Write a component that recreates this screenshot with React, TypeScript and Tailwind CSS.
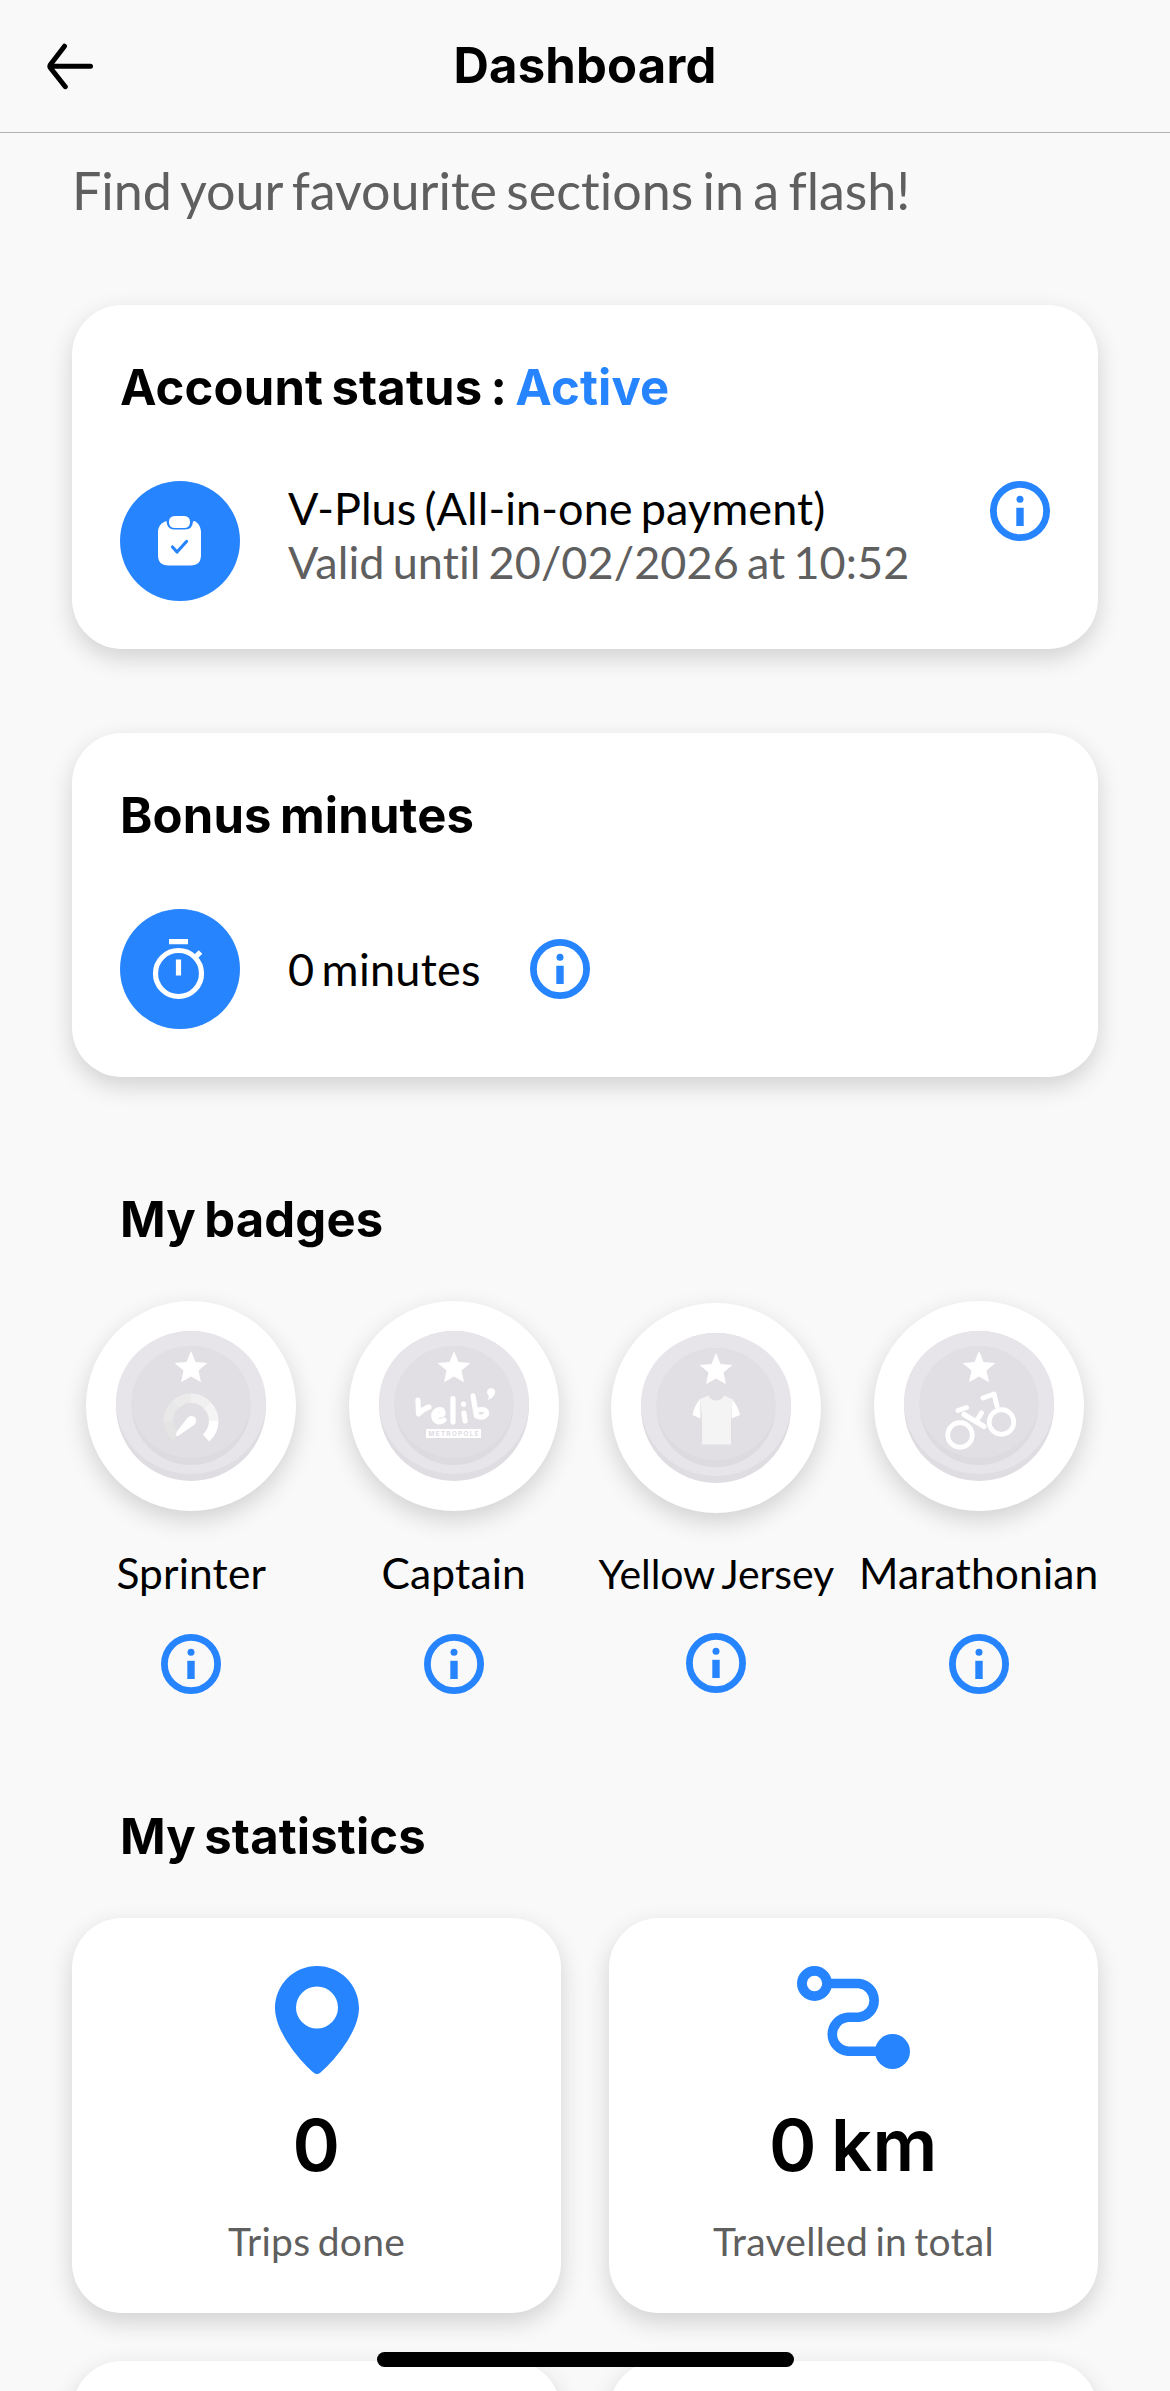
import type { ReactNode } from 'react'

const BLUE = '#2684ff'

function InfoIcon() {
  return (
    <svg viewBox="0 0 60 60" className="size-[60px] shrink-0" fill={BLUE}>
      <circle cx="30" cy="30" r="26.6" fill="none" stroke={BLUE} strokeWidth="6.8" />
      <circle cx="30" cy="18.200" r="3.5" />
      <path d="M26.3 26.8h7.4v18.200h-7.4z" />
    </svg>
  )
}

function BackArrow() {
  return (
    <svg viewBox="0 0 48 48" className="size-12" fill="none" stroke="#000" strokeWidth="5" strokeLinecap="round" strokeLinejoin="round">
      <path d="M18.500 4.200L4.500 22.500Q3.200 24.300 4.500 26L19.300 44.700M4 24.300H44.500" />
    </svg>
  )
}

function ClipboardIcon() {
  return (
    <svg viewBox="0 0 120 120" className="size-[120px] shrink-0">
      <circle cx="60" cy="60" r="60" fill={BLUE} />
      <path fill="#fff" d="M46.5 40C41 41.500 38 46 38 51V74Q38 84.500 48.500 84.500H70.500Q81 84.500 81 74V51C81 46 78 41.500 74.500 40L73 40.500Q72.500 48.500 65 48.500H54Q47 48.500 46.500 40Z" />
      <rect x="49" y="35" width="21" height="12" rx="5.500" fill="#fff" />
      <path d="M52.500 66L57 71L66.500 60.500" fill="none" stroke={BLUE} strokeWidth="3.200" strokeLinecap="round" strokeLinejoin="round" />
    </svg>
  )
}

function TimerIcon() {
  return (
    <svg viewBox="0 0 120 120" className="size-[120px] shrink-0">
      <circle cx="60" cy="60" r="60" fill={BLUE} />
      <g fill="none" stroke="#fff" strokeWidth="5.200">
        <circle cx="58.500" cy="64.500" r="23" />
        <path d="M49 32.600H68M58.500 50.500V66.500M75 48.500L80.500 43" />
      </g>
    </svg>
  )
}

function PinIcon() {
  return (
    <svg viewBox="0 0 84 108" className="h-[108px] w-[84px]">
      <path fill={BLUE} fillRule="evenodd" d="M42 0C18.800 0 0 18.800 0 42C0 67 28 98 38.500 106.500Q42 109.500 45.500 106.500C56 98 84 67 84 42C84 18.800 65.200 0 42 0ZM42 20.500A21 21 0 1 1 42 62.500A21 21 0 1 1 42 20.500Z" />
    </svg>
  )
}

function RouteIcon() {
  return (
    <svg viewBox="0 0 113 104" className="h-[104px] w-[113px]" fill="none" stroke={BLUE}>
      <circle cx="17.500" cy="17.500" r="12.600" strokeWidth="9.800" />
      <path strokeWidth="9.600" d="M32 17.500H62A17 17 0 0 1 62 51.300H51A17 17 0 0 0 51 85.200H86" />
      <circle cx="95.500" cy="85.500" r="17.500" fill={BLUE} stroke="none" />
    </svg>
  )
}

function Gauge() {
  return (
    <g>
      <g fill="none" strokeWidth="9.500">
        <path stroke="#e4e4e4" d="M60 106A22.700 22.700 0 0 1 52.300 89" />
        <path stroke="#e8e8e8" d="M52.300 90A22.700 22.700 0 0 1 59 74" />
        <path stroke="#ebebeb" d="M59 74A22.700 22.700 0 0 1 75 67.300" />
        <path stroke="#f0f0f0" d="M75 67.300A22.700 22.700 0 0 1 91 74" />
        <path stroke="#f5f5f5" d="M91 74A22.700 22.700 0 0 1 97.700 90" />
        <path stroke="#fff" d="M97.700 90A22.700 22.700 0 0 1 90 107" />
      </g>
      <path fill="#fff" d="M60 105L60.500 101L71 87.500A5 5 0 0 1 80 88Q80.500 92 78 94L62 105Z" />
    </g>
  )
}

function VelibLogo() {
  return (
    <g>
      <g fill="none" stroke="#fff" strokeWidth="5.200" strokeLinecap="round" strokeLinejoin="round">
        <path d="M39 69L39.500 83Q44 78 50 76" />
        <path d="M56 86L64 83Q64 77 58.500 79Q53 82 55.500 88Q59 93 65 89" />
        <path d="M74 67.500V91M85 82L86 90M84.500 73V73.200" />
        <path d="M94 65L97.500 85Q104 88 107.500 83Q108 77 99 79" />
      </g>
      <path fill="#fff" d="M108 62Q108 57.500 112 57Q117 58 116 62Q114.500 67 109 69L110 65.500Z" />
      <rect x="47" y="98" width="55" height="9" fill="#fff" />
      <text x="74.500" y="104.800" textAnchor="middle" fontSize="6.200" fontWeight="700" textLength="50" fill="#dcdadf" fontFamily="Inter, sans-serif">METROPOLE</text>
    </g>
  )
}

function Jersey() {
  return (
    <g>
      <path fill="#fff" d="M59 66Q53 73 51.500 82L59.500 85.500ZM91 66Q97 73 99 82L90.500 85.500Z" />
      <path fill="#f4f4f4" d="M59 66L67.500 62.500Q70 67.500 75 67.500Q80.500 67.500 83 62.500L92 66.500L90 83V111.500H61V83Z" />
    </g>
  )
}

function Bike() {
  return (
    <g fill="none" stroke="#fff" strokeLinecap="round" strokeLinejoin="round">
      <g strokeWidth="4.700">
        <circle cx="56" cy="104" r="12.300" />
        <circle cx="97.500" cy="91" r="12.300" />
      </g>
      <path strokeWidth="5" d="M54 79.500L62.500 76.500M60 83.500L80 95.500M72.500 90L77.500 82M79 67L90 63L93 75" />
    </g>
  )
}

function Medal({ children }: { children: ReactNode }) {
  return (
    <div className="flex size-[210px] items-center justify-center rounded-full bg-white shadow-[0_9px_24px_rgba(0,0,0,0.16)]">
      <svg viewBox="0 0 150 150" className="size-[150px]">
        <circle cx="75" cy="75" r="75" fill="#dfdde1" />
        <path fill="#e7e5e9" d="M0 71A75 71 0 0 1 150 71A75 72 0 0 1 0 71Z" />
        <circle cx="75" cy="74.500" r="59.500" fill="#dddbdf" />
        <path fill="#e1dfe3" d="M15.500 71A59.500 56 0 0 1 134.500 71A59.500 56 0 0 1 15.500 71Z" />
        <path fill="#fff" d="M75 20L79.500 31L91.500 32L82.500 39.500L85 51.200L75 45.500L65 51.200L67.500 39.500L58.500 32L70.500 31Z" />
        {children}
      </svg>
    </div>
  )
}

function Heading({ children }: { children: ReactNode }) {
  return <h2 className="whitespace-pre font-['Inter'] text-[49px] leading-[60px] font-bold tracking-[0.15px] [word-spacing:-3.5px]">{children}</h2>
}

const cardShadow = 'rounded-[50px] bg-white shadow-[0_9px_24px_rgba(0,0,0,0.16)]'

function Badge({ label, art, className = '', labelClass = 'text-[42.5px] mt-[37px] mb-[36px] tracking-[0.15px]' }: { label: string; art: ReactNode; className?: string; labelClass?: string }) {
  return (
    <div className={`flex w-[262.500px] flex-col items-center ${className}`}>
      <Medal>{art}</Medal>
      <p className={`whitespace-nowrap leading-[50px] ${labelClass}`}>{label}</p>
      <InfoIcon />
    </div>
  )
}

function Stat({ icon, value, label }: { icon: ReactNode; value: string; label: string }) {
  return (
    <div className={`flex h-[395px] flex-1 flex-col items-center pt-12 ${cardShadow}`}>
      <div className="h-[108px]">{icon}</div>
      <p className="mt-[29px] font-['Inter'] text-[72px] leading-[84px] font-semibold tracking-[0.6px] [word-spacing:-5px]">{value}</p>
      <p className="mt-[31px] text-[39px] leading-[47px] tracking-[0.28px] text-[#5f5f5f] [word-spacing:-3px]">{label}</p>
    </div>
  )
}

export default function App() {
  return (
    <div className="relative h-[2391px] w-[1170px] overflow-hidden bg-[#f9f9f9] font-['Lato',sans-serif] text-black [font-variant-ligatures:none]">
      <header className="grid h-[133px] grid-cols-[1fr_auto_1fr] items-center border-b border-[#b1b1b1] px-[46px]">
        <BackArrow />
        <h1 className="font-['Inter'] text-[49px] leading-[60px] font-bold tracking-[0.2px]">Dashboard</h1>
      </header>

      <main className="px-[72px]">
        <p className="mt-[26px] whitespace-nowrap text-[52px] leading-[62px] text-[#5f5f5f] [word-spacing:-4px]">Find your favourite sections in a flash!</p>

        <section className={`mt-[84px] h-[344px] px-12 pt-[53px] ${cardShadow}`}>
          <Heading>Account status : <span className="text-[#2684ff]">Active</span></Heading>
          <div className="mt-[63px] flex items-start">
            <ClipboardIcon />
            <div className="ml-12 grow text-[45px] leading-[54px] tracking-[0.08px] whitespace-nowrap [word-spacing:-3.5px]">
              <p>V-Plus (All-in-one payment)</p>
              <p className="text-[#5f5f5f]">Valid until 20/02/2026 at 10:52</p>
            </div>
            <InfoIcon />
          </div>
        </section>

        <section className={`mt-[84px] h-[344px] px-12 pt-[53px] ${cardShadow}`}>
          <Heading>Bonus minutes</Heading>
          <div className="mt-[63px] flex items-center">
            <TimerIcon />
            <p className="mr-[49px] ml-12 text-[45px] leading-[54px] tracking-[0.25px] [word-spacing:-4.5px]">0 minutes</p>
            <InfoIcon />
          </div>
        </section>

        <section className="mt-[113px]">
          <div className="pl-12"><Heading>My badges</Heading></div>
          <div className="-mx-3 mt-[51px] flex">
            <Badge label="Sprinter" art={<Gauge />} />
            <Badge label="Captain" art={<VelibLogo />} />
            <Badge label="Yellow Jersey" art={<Jersey />} className="pt-[2px]" labelClass="text-[41px] mt-[36px] mb-[34px] tracking-[-0.1px] [word-spacing:-2px]" />
            <Badge label="Marathonian" art={<Bike />} />
          </div>
        </section>

        <section className="mt-[113px]">
          <div className="pl-12"><Heading>My statistics</Heading></div>
          <div className="mt-[51px] flex gap-12">
            <Stat icon={<PinIcon />} value="0" label="Trips done" />
            <Stat icon={<RouteIcon />} value="0 km" label="Travelled in total" />
          </div>
          <div className="mt-12 flex gap-12">
            <div className={`h-[395px] flex-1 ${cardShadow}`} />
            <div className={`h-[395px] flex-1 ${cardShadow}`} />
          </div>
        </section>
      </main>

      <div className="absolute bottom-6 left-[377px] h-[15px] w-[417px] rounded-full bg-black" />
    </div>
  )
}
